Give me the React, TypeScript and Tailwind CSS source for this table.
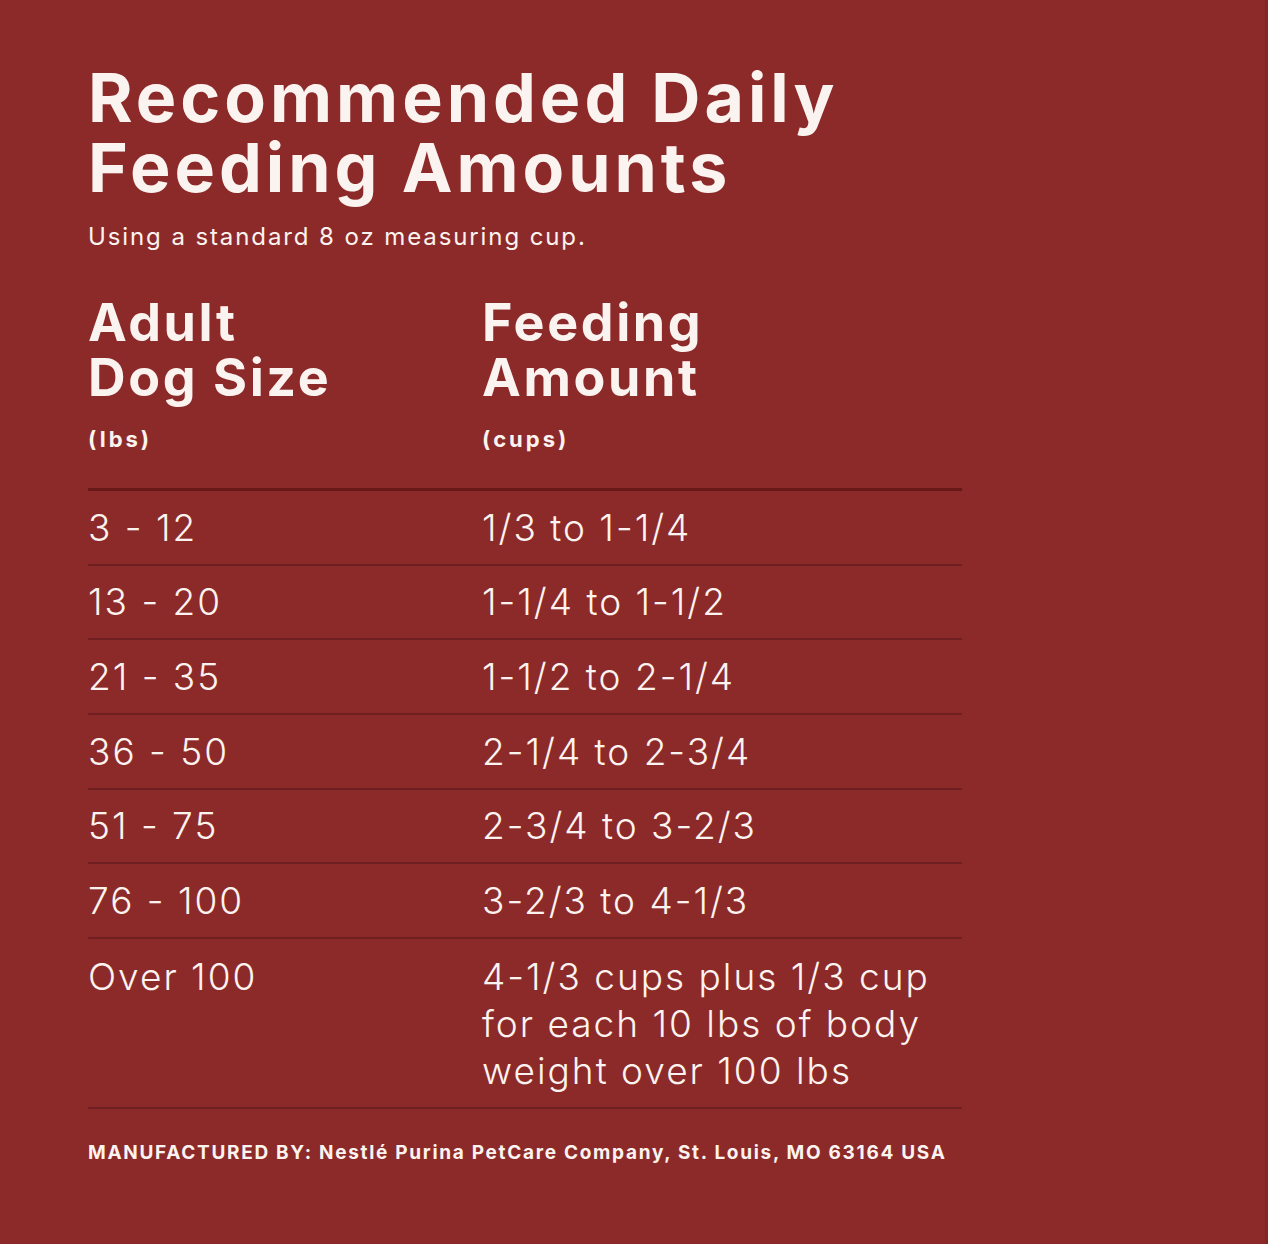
const rows: [string, string][] = [
  ["3 - 12", "1/3 to 1-1/4"],
  ["13 - 20", "1-1/4 to 1-1/2"],
  ["21 - 35", "1-1/2 to 2-1/4"],
  ["36 - 50", "2-1/4 to 2-3/4"],
  ["51 - 75", "2-3/4 to 3-2/3"],
  ["76 - 100", "3-2/3 to 4-1/3"],
];

export default function App() {
  return (
    <div className="w-full h-[1244px] bg-[#8c2a2a] text-[#fbf3ef] pl-[88px] pt-[62px] font-['Inter',sans-serif] border-r-[3px] border-[#832626]">
      <h1 className="text-[68px] leading-[70px] font-bold tracking-[4px]">
        Recommended Daily
        <br />
        Feeding Amounts
      </h1>
      <p className="mt-[19px] text-[24px] leading-[32px] font-normal tracking-[1.9px]">
        Using a standard 8 oz measuring cup.
      </p>

      <div className="w-[874px] mt-[42px]">
        <div className="flex border-b-[3px] border-[#691818] pb-[36px]">
          <div className="w-[394px]">
            <div className="text-[52px] leading-[55px] font-bold tracking-[2.6px]">
              Adult
              <br />
              Dog Size
            </div>
            <div className="mt-[21px] text-[22px] leading-[26px] font-bold tracking-[3px]">(lbs)</div>
          </div>
          <div className="flex-1">
            <div className="text-[52px] leading-[55px] font-bold tracking-[2.6px]">
              Feeding
              <br />
              Amount
            </div>
            <div className="mt-[21px] text-[22px] leading-[26px] font-bold tracking-[3px]">(cups)</div>
          </div>
        </div>

        {rows.map(([size, amount]) => (
          <div
            key={size}
            className="flex items-center h-[74.7px] border-b-2 border-[#6f1f1f] text-[37px] font-light tracking-[2px]"
          >
            <div className="w-[394px]">{size}</div>
            <div className="flex-1">{amount}</div>
          </div>
        ))}

        <div className="flex pt-[13.5px] pb-[13.5px] border-b-2 border-[#6f1f1f] text-[37px] leading-[47px] font-light tracking-[2px]">
          <div className="w-[394px]">Over 100</div>
          <div className="flex-1">
            4-1/3 cups plus 1/3 cup
            <br />
            for each 10 lbs of body
            <br />
            weight over 100 lbs
          </div>
        </div>

        <p className="mt-[32px] text-[19px] leading-[24px] font-bold tracking-[1.7px] whitespace-nowrap">
          MANUFACTURED BY: Nestlé Purina PetCare Company, St. Louis, MO 63164 USA
        </p>
      </div>
    </div>
  );
}
